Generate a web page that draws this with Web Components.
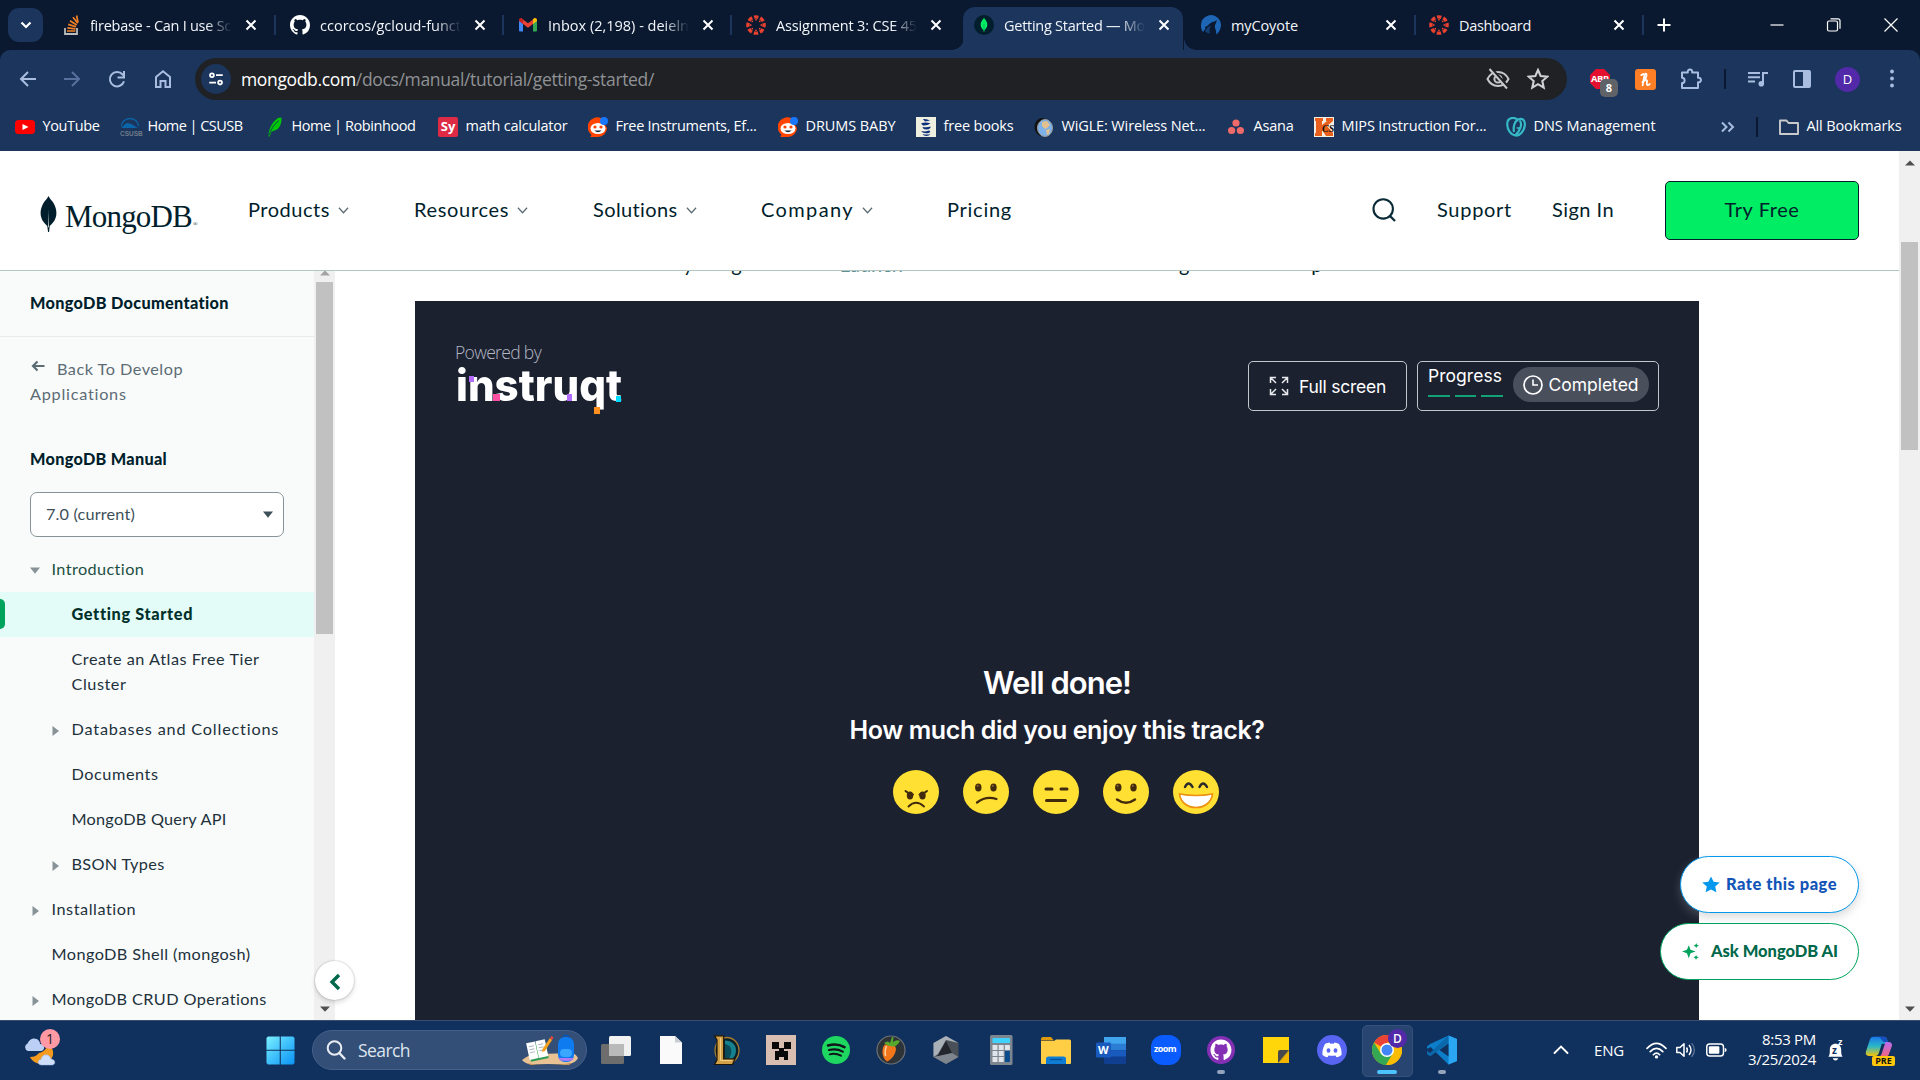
<!DOCTYPE html>
<html lang="en">
<head>
<meta charset="utf-8">
<title>Getting Started — MongoDB Manual</title>
<style>
html,body{margin:0;height:100%;overflow:hidden;background:#fff}
body{font-family:"Open Sans","Noto Sans",sans-serif;width:1920px;height:1080px}
</style>
</head>
<body>
<desktop-screen></desktop-screen>
<script>
const ICONS = {
  // --- tab favicons
  stack:['0 0 20 20','<path d="M4 13v6h12v-6" fill="none" stroke="#bcbbbb" stroke-width="1.8"/><g stroke="#f48024" stroke-width="1.7"><path d="M6 16h8.4M6.3 12.9l8.2.9M7.2 9.4l7.8 2.4M9 5.700l6.700 4.300M12 2.300l4.700 6M15.600.5l1.400 7"/></g>'],
  github:['0 0 16 16','<path fill="#fff" d="M8 0C3.58 0 0 3.58 0 8c0 3.54 2.29 6.53 5.47 7.59.4.07.55-.17.55-.38 0-.19-.01-.82-.01-1.49-2.01.37-2.53-.49-2.69-.94-.09-.23-.48-.94-.82-1.13-.28-.15-.68-.52-.01-.53.63-.01 1.08.58 1.23.82.72 1.21 1.87.87 2.33.66.07-.52.28-.87.51-1.07-1.78-.2-3.64-.89-3.64-3.95 0-.87.31-1.59.82-2.15-.08-.2-.36-1.02.08-2.12 0 0 .67-.21 2.2.82.64-.18 1.32-.27 2-.27s1.36.09 2 .27c1.53-1.04 2.2-.82 2.2-.82.44 1.1.16 1.92.08 2.12.51.56.82 1.27.82 2.15 0 3.07-1.87 3.75-3.65 3.95.29.25.54.73.54 1.48 0 1.07-.01 1.93-.01 2.2 0 .21.15.46.55.38A8.01 8.01 0 0 0 16 8c0-4.42-3.58-8-8-8z"/>'],
  gmail:['0 0 20 20','<path fill="#4285f4" d="M1 5v10.500q0 1 1 1h3V8z"/><path fill="#34a853" d="M19 5v10.500q0 1-1 1h-3V8z"/><path fill="#ea4335" d="M5 9V4.500l5 3.700 5-3.700V9l-5 3.700z"/><path fill="#c5221f" d="M1 5.500V5c0-2 2-2.500 3.200-1.600L5 4v5L1 6z"/><path fill="#fbbc04" d="M19 6V5c0-2-2-2.500-3.200-1.600L15 4v5z"/>'],
  canvas:['0 0 20 20','<circle cx="10" cy="10" r="8.100" fill="none" stroke="#e8412f" stroke-width="3.400" stroke-dasharray="4.400 1.960" stroke-dashoffset="2.200"/><g fill="#e8412f"><circle cx="10" cy="4.700" r=".9"/><circle cx="10" cy="15.300" r=".9"/><circle cx="4.700" cy="10" r=".9"/><circle cx="15.300" cy="10" r=".9"/><circle cx="6.300" cy="6.300" r=".9"/><circle cx="13.700" cy="6.300" r=".9"/><circle cx="6.300" cy="13.700" r=".9"/><circle cx="13.700" cy="13.700" r=".9"/></g>'],
  leaf:['0 0 20 20','<circle cx="10" cy="10" r="10" fill="#001e2b"/><path d="M10 3c2.500 2.700 3.500 5 3.300 7.300-.2 2.200-1.400 3.700-2.900 4.900L10 17l-.4-1.800C8.100 14 6.900 12.500 6.700 10.300 6.500 8 7.500 5.700 10 3z" fill="#00ed64"/><path d="M10 9v8" stroke="#00a35c" stroke-width=".7"/>'],
  coyote:['0 0 20 20','<path fill="#1e66b5" d="M0 10a10 10 0 0 1 17-7 10 10 0 0 1 2.500 10c-.7 3-2 5-4.500 6.500.4-2.500 0-4.500-1-6.500-.3-1.700 0-3.500 1-5L16 5l-2.500 1.500c-3 .5-5 2-6.500 4L4 12l.5 1.500L2 17a10 10 0 0 1-2-7z"/><path fill="#1e66b5" d="M7 12l3-1.500c-1.500 2.500-1.700 5-1.200 8C6.500 18 5 17.500 4 16z" opacity=".5"/>'],
  close:['0 0 20 20','<path d="M5.500 5.500l9 9m0-9l-9 9" stroke="#fff" stroke-width="2"/>'],
  chev:['0 0 20 20','<path d="M5.500 7.500l4.500 4.500 4.500-4.500" fill="none" stroke="#fff" stroke-width="2.200"/>'],
  plus:['0 0 20 20','<path d="M10 3.500v13M3.500 10h13" stroke="#fff" stroke-width="2"/>'],
  min:['0 0 20 20','<path d="M3.500 10h13" stroke="#fff" stroke-width="1.200"/>'],
  restore:['0 0 20 20','<rect x="3.500" y="6" width="10" height="10" rx="1.500" fill="none" stroke="#fff" stroke-width="1.200"/><path d="M6.500 3.800h7.500q2 0 2 2v8" fill="none" stroke="#fff" stroke-width="1.200"/>'],
  wclose:['0 0 20 20','<path d="M3.500 3.500l13 13m0-13l-13 13" stroke="#fff" stroke-width="1.200"/>'],
  // --- toolbar
  back:['0 0 20 20','<path d="M18 10H3m7-7l-7 7 7 7" fill="none" stroke="#a9bde0" stroke-width="2"/>'],
  fwd:['0 0 20 20','<path d="M2 10h15m-7-7l7 7-7 7" fill="none" stroke="#56719d" stroke-width="2"/>'],
  reload:['0 0 20 20','<path d="M17 12.200A7.200 7.200 0 1 1 15.600 5.500l1.900 2" fill="none" stroke="#a9bde0" stroke-width="2"/><path d="M17 2v6.500h-6.500" fill="none" stroke="#a9bde0" stroke-width="2"/>'],
  home:['0 0 20 20','<path d="M3 8l7-5.800L17 8v10h-4.500v-6h-5v6H3z" fill="none" stroke="#a9bde0" stroke-width="2"/>'],
  tune:['0 0 20 20','<g fill="none" stroke="#fff" stroke-width="2"><circle cx="5.500" cy="5.800" r="2.100"/><path d="M10 5.800h7.500M2.500 14h7.500"/><circle cx="14.500" cy="14" r="2.100"/></g>'],
  eye:['0 0 24 24','<g fill="none" stroke="#c7c8ca" stroke-width="2"><path d="M1.500 12C4 7 8 5 12 5s8 2 10.500 7c-2.500 5-6.500 7-10.500 7S4 17 1.500 12z"/><circle cx="12" cy="12" r="3.600"/></g><path d="M5 1.500L22 20" stroke="#202124" stroke-width="3"/><path d="M3.500 2L21 21.500" stroke="#c7c8ca" stroke-width="2"/>'],
  star:['0 0 20 20','<path d="M10 1.800l2.400 5.500 6 .6-4.500 4 1.300 5.900-5.200-3.100-5.200 3.100 1.300-5.900-4.500-4 6-.6z" fill="none" stroke="#d0d1d3" stroke-width="1.900"/>'],
  puzzle:['0 0 24 24','<path d="M3 5.500h5.800a2.300 2.300 0 1 1 4.400 0H19v5.300a2.300 2.300 0 1 1 0 4.400V21H3v-5a2.600 2.600 0 1 0 0-5.200z" fill="none" stroke="#a9bde0" stroke-width="2" stroke-linejoin="round"/>'],
  music:['0 0 20 20','<g stroke="#a9bde0" stroke-width="2" fill="none"><path d="M0 4h12M0 8.300h12M0 12.600h7"/><path d="M15 14.500V4h5"/></g><circle cx="13.300" cy="14.800" r="2.800" fill="#a9bde0"/>'],
  panel:['0 0 20 20','<rect x="2" y="2" width="16" height="16" rx="1" fill="none" stroke="#a9bde0" stroke-width="2"/><path d="M11 2h7v16h-7z" fill="#a9bde0"/>'],
  dots:['0 0 20 20','<g fill="#a9bde0"><circle cx="10" cy="2.500" r="1.900"/><circle cx="10" cy="9.500" r="1.900"/><circle cx="10" cy="16.500" r="1.900"/></g>'],
  abp:['0 0 20 20','<path d="M6 0h8l6 6v8l-6 6H6l-6-6V6z" fill="#e5102d"/>'],
  honey:['0 0 20 20','<path d="M7 12.500c3-2.500 4-5 4-7 0-1.500-1.500-1.500-2 .5L7.300 15.500M8.200 12c1.300-2 3.300-2.300 3.300-.5 0 1.200-.6 2.600 0 3.500.7.700 1.800.2 2.500-.8M6 5.800l2-1" fill="none" stroke="#fff" stroke-width="1.700" stroke-linecap="round"/>'],
  // --- bookmarks
  youtube:['0 0 20 20','<rect y="3" width="20" height="14" rx="3.500" fill="#f00"/><path d="M7.500 7l6 3-6 3z" fill="#fff"/>'],
  csusb:['0 0 20 20','<path d="M1.500 9.500a8.500 8 0 0 1 17 0" fill="none" stroke="#0a66a8" stroke-width="1.300"/><path d="M1 11c3-2 4-5 6.500-5 2 0 2 1 3.500 1 2 0 4 3.500 8 4z" fill="#0a66a8"/>'],
  robin:['0 0 20 20','<path d="M4.500 19.500C4.500 12 8 5 14 1c1.500-.7 3-.7 3.500 0 .3 3.500-1 9-4.500 11.500-2.500 1.300-4 1.500-5.500 2L5.700 19.500z" fill="#00c805"/><path d="M5 18.500C6.500 13 10 7 15 3.500" stroke="#1b355d" stroke-width=".9" fill="none"/>'],
  reddit:['0 0 20 20','<path d="M2 20c1-1 1.500-1.500 1.300-2.500A9.500 9.500 0 0 1 5 1.500C8 0 11 0 13 1l6 10a9 9 0 0 1-9 9z" fill="#ff4500"/><ellipse cx="10" cy="11.500" rx="7.500" ry="5.600" fill="#fff"/><circle cx="7" cy="10" r="1.600" fill="#ff4500"/><circle cx="13" cy="10" r="1.600" fill="#ff4500"/><path d="M6.300 13.500q3.700 3.500 7.400 0z" fill="#123"/><circle cx="16" cy="4" r="4" fill="#1877ff"/>'],
  books:['0 0 20 20','<path fill="#efefdf" d="M0 0h20v20H0z"/><g fill="#0b2e7d"><path d="M7 2q4-.5 7 1.500L9 4.500zM5 6.500q5-2 9.500 0-3 2.200-7.500 2zM6.500 10q5 .8 8-.5.5 2.500-4 3-3.500 0-4-2.500zM5 14q4 1 8-.5 3 1.500-1 2.700-5 .6-7-2.200zM6.500 17q4 1.200 8 0-1.500 2-4 2-3 0-4-2z"/></g>'],
  wigle:['0 0 20 20','<ellipse cx="8" cy="10" rx="7.500" ry="9" fill="#111"/><ellipse cx="11" cy="11" rx="7.500" ry="8.500" fill="#7fb2e8" stroke="#999" stroke-width="1"/><path d="M8 5l5-1 3 4-3 3-2 1-3-3zM12 13l4-1-1 5-2 1z" fill="#e3c08e"/>'],
  asana:['0 0 20 20','<g fill="#f06a6a"><circle cx="10" cy="6" r="3.600"/><circle cx="5.600" cy="13.500" r="3.600"/><circle cx="14.400" cy="13.500" r="3.600"/></g>'],
  kicon:['0 0 20 20','<path fill="#f4efe4" d="M0 0h20v20H0z"/><path fill="#e8601c" d="M1 1h8v3H8v4l5-4h-1V1h7v3l-6 5 6 7v3h-7l-4-6v6H1v-3h1V4H1z"/>'],
  godaddy:['0 0 20 20','<g fill="none" stroke="#35b9c6" stroke-width="2.200"><path d="M12 3.500C9-.5 1-.2 1.200 7.500 1.400 13 5 18 9 18.500c5-4 8-12 4.500-15"/><path d="M8 15C7 10 8.500 4.500 12 2.500c4-2 7.500.5 6.800 6C18 14 14 19 10 18.500"/></g><path d="M10.500 11h3.500l-1.500 3" fill="none" stroke="#35b9c6" stroke-width="1.500"/>'],
  more:['0 0 20 20','<path d="M4 5.500l4.500 4.500L4 14.500M10.500 5.500L15 10l-4.500 4.500" fill="none" stroke="#a9bde0" stroke-width="2"/>'],
  folder:['0 0 20 20','<path d="M1 3.500h6.500l2 2.500H19v11H1z" fill="none" stroke="#c9cacc" stroke-width="1.900" stroke-linejoin="round"/>'],
  // --- site
  mleaf:['0 0 18 38','<path d="M9 0c1.200 2.800 3.300 4.200 5.300 7.300 4 6.500 4.300 14-.3 19.700-1.200 1.600-2.500 2.700-3.700 3.700L9.600 37H8.500L7.700 30.700C6.500 29.700 5.200 28.600 4 27-.6 21.300-.3 13.800 3.700 7.300 5.700 4.200 7.800 2.800 9 0z" fill="#001e2b"/><path d="M9 14l.5 18h-1z" fill="#c8d4cf"/>'],
  ndown:['0 0 12 12','<path d="M1 3l5 5.500L11 3" fill="none" stroke="#5c6c75" stroke-width="1.400"/>'],
  search:['0 0 24 24','<circle cx="11.200" cy="10.900" r="9.700" fill="none" stroke="#0b2a37" stroke-width="2.100"/><path d="M18 18l5 5" stroke="#0b2a37" stroke-width="2.300"/>'],
  arrow:['0 0 14 12','<path d="M13.500 6H2M6.500 1.500L2 6l4.500 4.500" fill="none" stroke="#5c6c75" stroke-width="2.200"/>'],
  down:['0 0 10 7','<path d="M0 .5h10L5 6.700z" fill="currentColor"/>'],
  right:['0 0 7 12','<path d="M.5 1l6.500 5-6.500 5z" fill="currentColor"/>'],
  up:['0 0 10 7','<path d="M0 6.500h10L5 .5z" fill="currentColor"/>'],
  left:['0 0 12 18','<path d="M10 2L3 9l7 7" fill="none" stroke="#00684a" stroke-width="3.400"/>'],
  full:['0 0 20 20','<g fill="none" stroke="#e6e8ec" stroke-width="1.500"><path d="M1.500 7V1.500H7M1.500 1.500L7 7M13 1.500h5.500V7M18.500 1.500L13 7M1.500 13v5.500H7M1.500 18.500L7 13M18.500 13v5.500H13M18.500 18.500L13 13"/></g>'],
  clock:['0 0 20 20','<circle cx="10" cy="10" r="9" fill="none" stroke="#fff" stroke-width="1.700"/><path d="M10 4.500V10h5" fill="none" stroke="#fff" stroke-width="1.600"/>'],
  fstar:['0 0 20 20','<path d="M10 .5l2.900 6.300 6.800.8-5 4.700 1.300 6.900-6-3.400-6 3.400 1.300-6.900-5-4.700 6.800-.8z" fill="#0498ec"/>'],
  spark:['0 0 20 20','<path d="M8 2.500l2 5.500 6 2-6 2.200L8 18l-2.200-5.800L0 10l5.800-2z" fill="#00a35c"/><path d="M16.700 0l.9 2.200 2.400.9-2.400.9-.9 2.300-.9-2.300-2.300-.9 2.300-.9zM16.500 14l.9 2 2.300.9-2.300.9-.9 2.200-.9-2.200-2.200-.9 2.200-.9z" fill="#00a35c"/>'],
  // --- rating faces
  f1:['0 0 46 44','<ellipse cx="23" cy="22" rx="23" ry="22" fill="#ffe033"/><g fill="#422b0d"><ellipse cx="17" cy="25.500" rx="3.200" ry="4"/><ellipse cx="29.500" cy="25.500" rx="3.200" ry="4"/></g><g fill="none" stroke="#422b0d" stroke-width="1.900" stroke-linecap="round"><path d="M12.500 21q3 3 7.500 3.500M34 21q-3 3-7.500 3.500M15.500 36.500q7.500-7.500 15.500 0"/></g>'],
  f2:['0 0 46 44','<ellipse cx="23" cy="22" rx="23" ry="22" fill="#ffe033"/><ellipse cx="15.300" cy="17.500" rx="3.200" ry="4" fill="#422b0d"/><ellipse cx="30.500" cy="17.500" rx="3.200" ry="4" fill="#422b0d"/><circle cx="14.600" cy="15.800" r="1" fill="#8c6a3a"/><circle cx="29.800" cy="15.800" r="1" fill="#8c6a3a"/><path d="M14 32.500q9-7 19.500-3.500" fill="none" stroke="#422b0d" stroke-width="2.300" stroke-linecap="round"/>'],
  f3:['0 0 46 44','<ellipse cx="23" cy="22" rx="23" ry="22" fill="#ffe033"/><path d="M13 19h6M28 19h6M13.500 30.500h19" stroke="#422b0d" stroke-width="3" stroke-linecap="round"/>'],
  f4:['0 0 46 44','<ellipse cx="23" cy="22" rx="23" ry="22" fill="#ffe033"/><ellipse cx="15.300" cy="17.500" rx="3.200" ry="4" fill="#422b0d"/><ellipse cx="30.500" cy="17.500" rx="3.200" ry="4" fill="#422b0d"/><circle cx="14.600" cy="15.800" r="1" fill="#8c6a3a"/><circle cx="29.800" cy="15.800" r="1" fill="#8c6a3a"/><path d="M14 29.500q9 6.500 18 0" fill="none" stroke="#422b0d" stroke-width="2.400" stroke-linecap="round"/>'],
  f5:['0 0 46 44','<ellipse cx="23" cy="22" rx="23" ry="22" fill="#ffe033"/><path d="M12 17q3.500-7 7.500 0M26.500 17q3.500-7 7.500 0" fill="none" stroke="#2b2a2a" stroke-width="2.400" stroke-linecap="round"/><path d="M6.500 24q16.500 3 33 0c-1 8-7.500 13.500-16.500 13.500S7.500 32 6.500 24z" fill="#fff" stroke="#ee9010" stroke-width="1.700"/>'],
  // --- taskbar
  weather:['0 0 36 36','<path d="M14 21c5-1 8-5 9-9 3 2 6 6 5 11s-6 9-11 9c-6 0-10-3-12-7 4 0 6-1 9-4z" fill="#f59a1c"/><path d="M3 19a4 4 0 0 1-.5-7.500C4 8 6.500 6.500 9 6.500c4 0 6 3 6 5.500 3 0 4.500 2 4 4.500-.5 1.500-1.500 2.500-3 2.500z" fill="#bcd0f5"/><path d="M16 33c-2.500-.3-3-2-2.700-3.500.3-1.500 1.500-2 2.700-2 .5-3 2.500-4.700 5-4.700s4.500 2 4.800 4.200c2.200 0 4 1.500 4 3.300S28.500 33 27 33z" fill="#cfdefa" stroke="#9bb5e6" stroke-width=".5"/>'],
  win:['0 0 30 30','<defs><linearGradient id="w" x1="0" y1="0" x2="1" y2="1"><stop offset="0" stop-color="#7cf0ff"/><stop offset=".5" stop-color="#3fc0fb"/><stop offset="1" stop-color="#0a93f5"/></linearGradient></defs><path d="M2 .5h12.200v13.700H.5V2zM15.300.5H28L29.500 2v12.200H15.300zM.5 15.300h13.700v14.200H2L.5 28zM15.300 15.300h14.200V28L28 29.500H15.300z" fill="url(#w)"/>'],
  tsearch:['0 0 20 20','<circle cx="8.500" cy="8" r="6.800" fill="none" stroke="#e9edf3" stroke-width="2"/><path d="M13.300 13l5.200 5.500" stroke="#e9edf3" stroke-width="2.400" stroke-linecap="round"/>'],
  school:['0 0 58 32','<path d="M1 26q8-7 18-6l32-1q4 1 6 5-2 5-10 6H13Q5 31 1 26z" fill="#e8c292"/><path d="M5 29q20 4 46 0l-3 2H10z" fill="#c89457"/><g transform="rotate(-12 17 17)"><path d="M8 9h18v17H8z" fill="#2f9a54"/><path d="M7 7h9v17H7zM16.500 7H26v17h-9.500z" fill="#fff"/><path d="M9 11h5M9 14h5M9 17h5M18.500 11h5M18.500 14h5M18.500 17h5" stroke="#a9b6c5" stroke-width="1"/></g><path d="M29 4l2 2-7 11-3 1 .5-3z" fill="#f5a11b"/><path d="M29 4l1.500-2 2 1.500L31 6z" fill="#e8473c"/><rect x="37" y="3" width="16" height="25" rx="7" fill="#0f7bf0"/><path d="M42 3q3-4 6 0" fill="none" stroke="#0b56b5" stroke-width="1.500"/><rect x="39" y="15" width="12" height="8" rx="4" fill="#39a7ff"/><path d="M38 24h14v2q-6 2-14 0z" fill="#b07af5"/>'],
  taskview:['0 0 32 30','<rect x="1" y="9" width="23" height="20" rx="1.500" fill="#6d6d6d"/><rect x="9" y="1" width="22" height="20" rx="1.500" fill="#f1f1f1"/><path d="M9 9h15v12H9z" fill="#b9b9b9"/>'],
  file:['0 0 30 30','<path d="M4 1h15l7 6.500V29H4z" fill="#fafafa"/><path d="M19 1v6.500h7z" fill="#c9cdd2"/>'],
  lol:['0 0 30 30','<ellipse cx="16" cy="15.500" rx="12" ry="13" fill="#0a2028" stroke="#a57b30" stroke-width="1.300"/><path d="M14 5.500c7 0 11 4.500 11 10 0 4-2 7-4 8.500h-7z" fill="#15808e"/><path d="M14 9c5 1 7 4 6 10l-2 5h-4z" fill="#0b4a58"/><path d="M3.500.8h9.200v23H24l-2.500 5.700H3.500L6 25V5z" fill="#d2a047" stroke="#1e1608" stroke-width="1.200"/><path d="M9.500 3v22.500h11" fill="none" stroke="#f0cf86" stroke-width="1"/>'],
  creeper:['0 0 30 30','<path fill="#d8bdb1" d="M0 0h30v30H0z"/><path d="M6 7h7v7H6zM18 7h7v7h-7zM13 13h5v3h4v9h-4v-3h-5v3H9v-9h4z" fill="#090909"/>'],
  spotify:['0 0 30 30','<circle cx="15" cy="15" r="14" fill="#1ed760"/><g fill="none" stroke="#10151b" stroke-linecap="round"><path d="M7 10.500q9-2.500 16.500 1.700" stroke-width="2.600"/><path d="M8 15q7.500-2 13.800 1.600" stroke-width="2.200"/><path d="M8.700 19.300q6-1.500 11.300 1.400" stroke-width="1.900"/></g>'],
  fl:['0 0 30 30','<circle cx="15" cy="15" r="14" fill="#2e3338" stroke="#6c7278" stroke-width="1.200"/><path d="M8.500 10c5-3 11-1 11.500 4-.5 6-5 11-9 12.500-3-2-5-7-4.500-11 .2-2.500 1-4.500 2-5.500z" fill="#f4761b"/><path d="M10.500 11q-2 4-1 10" stroke="#ffd0a0" stroke-width="1.600" fill="none"/><path d="M8 8q4-3 6 0l2-6h1.500L17 7q4-3 7-1-2 4-5 5.500-6 .5-11-3.500z" fill="#58a82c"/>'],
  hex:['0 0 30 30','<path d="M15 1l12.500 7v14L15 29 2.500 22V8z" fill="#4a5058"/><path d="M15 1l12.500 7L15 5 7 19l-4.500 3V8z" fill="#a9b0b8"/><path d="M15 6l6 12-15 4z" fill="#23272d"/><path d="M2.500 22L21 18l6.500 4L15 29z" fill="#7e858e"/>'],
  calc:['0 0 30 30','<rect x="4" y="0" width="22.500" height="30" rx="1.500" fill="#7d868f"/><path d="M6.500 3h17.500v5H6.500z" fill="#3fd2ff"/><g fill="#dfe5ea"><path d="M6.500 10h5v5h-5zM12.700 10h5v5h-5zM18.900 10h5v5h-5zM6.500 16h5v5h-5zM12.700 16h5v5h-5zM6.500 22h5v5h-5zM12.700 22h5v5h-5z"/></g><path d="M18.900 16h5v11h-5z" fill="#0a4b8c"/>'],
  explorer:['0 0 30 30','<path d="M0 4q0-2 2-2h8l3 3.500H0z" fill="#e09b0d"/><path d="M0 6h13l2-1.500h13.500q1.500 0 1.500 1.500v22q0 1-1 1H1q-1 0-1-1z" fill="#ffce45"/><path d="M5 29v-5q0-2.500 2.500-2.500h15Q25 21.500 25 24v5z" fill="#0f7cd4"/><path d="M9 24.500h12" stroke="#075095" stroke-width="1.200"/>'],
  word:['0 0 30 30','<path d="M8 2h22v7H8z" fill="#41a5ee"/><path d="M8 8.700h22v6.600H8z" fill="#2b7cd3"/><path d="M8 15.200h22v6.600H8z" fill="#185abd"/><path d="M8 21.800h22v6.200q0 1-1 1H9q-1 0-1-1z" fill="#103f91"/><rect x="0" y="7.500" width="15" height="15" rx="1.200" fill="#185abd"/>'],
  zoom:['0 0 30 30','<rect width="30" height="30" rx="12" fill="#0b5cff"/>'],
  ghub:['0 0 30 30','<circle cx="15" cy="15" r="14" fill="#8430b5"/><g transform="translate(4.500 4.500) scale(1.310)"><path fill="#fff" d="M8 0C3.580 0 0 3.580 0 8c0 3.540 2.290 6.530 5.470 7.590.4.070.55-.17.550-.38 0-.19-.01-.82-.01-1.490-2.010.37-2.530-.49-2.690-.94-.09-.23-.48-.94-.82-1.130-.28-.15-.68-.52-.01-.53.63-.01 1.080.58 1.230.82.720 1.210 1.870.87 2.330.66.070-.52.280-.87.510-1.070-1.780-.2-3.640-.89-3.640-3.950 0-.87.310-1.590.820-2.150-.08-.2-.36-1.020.080-2.120 0 0 .67-.21 2.200.82.640-.18 1.320-.27 2-.27s1.360.09 2 .27c1.530-1.040 2.200-.82 2.200-.82.440 1.100.16 1.920.080 2.120.51.560.820 1.270.820 2.150 0 3.070-1.870 3.750-3.650 3.950.29.250.54.730.540 1.480 0 1.070-.01 1.930-.01 2.200 0 .21.150.46.550.38A8.010 8.010 0 0 0 16 8c0-4.420-3.580-8-8-8z"/></g>'],
  sticky:['0 0 30 30','<path d="M2 2h26v14L17 28H2z" fill="#ffd60a"/><path d="M28 15L17 28V17q0-2 2-2z" fill="#46484b"/><path d="M28 16v12H17z" fill="#f2b600"/>'],
  discord:['0 0 30 30','<circle cx="15" cy="15" r="15" fill="#5865f2"/><path d="M8 9c2-1 3-1.300 4.500-1.500l.7 1.200q1.800-.3 3.600 0l.7-1.200C19 7.700 20.500 8.200 22 9c2 3.500 3 7.500 2.500 11-1.500 1.300-3 2-5 2.300l-1-1.900q-3.500.9-7 0l-1 1.900c-2-.3-3.500-1-5-2.300C5 16.500 6 12.500 8 9z" fill="#fff"/><ellipse cx="11.500" cy="15.500" rx="1.900" ry="2.200" fill="#5865f2"/><ellipse cx="18.500" cy="15.500" rx="1.900" ry="2.200" fill="#5865f2"/>'],
  chrome:['0 0 30 30','<circle cx="15" cy="15" r="15" fill="#fbbc04"/><path d="M15 15L2 7.500A15 15 0 0 1 28 7.500H15z" fill="#ea4335"/><path d="M2 7.500A15 15 0 0 0 14 30l7-11.500L15 15 8.700 18.500z" fill="#34a853"/><path d="M28 7.500H15v7.500l6 3.500L14 30A15 15 0 0 0 28 7.500z" fill="#fbbc04"/><circle cx="15" cy="15" r="7" fill="#fff"/><circle cx="15" cy="15" r="5.500" fill="#4285f4"/>'],
  vscode:['0 0 30 30','<path d="M21.500.5L30 4v22l-8.500 3.500L3.500 12 1 13.800 0 13v-1.500l3-2.500z" fill="#0d7dc9"/><path d="M21.500 29.500L30 26V4L21.500.5z" fill="#2ba6f2"/><path d="M21.500.5L3 18l-3-2.500v3.500l3 2.500L21.500 8z" fill="#0a68ab"/><path d="M21.500 8.500v13L12.500 15z" fill="#10305d"/>'],
  tup:['0 0 20 20','<path d="M3.500 13L10 6.500l6.500 6.500" fill="none" stroke="#fff" stroke-width="1.900" stroke-linecap="round"/>'],
  wifi:['0 0 20 16','<g fill="none" stroke="#fff" stroke-width="1.600" stroke-linecap="round"><path d="M1 6q9-9.500 18 0M4 9q6-6 12 0M7 12q3-3 6 0"/></g><circle cx="10" cy="14" r="1.600" fill="#fff"/>'],
  sound:['0 0 20 16','<path d="M.8 5.500H4L8 1.700v12.600L4 10.500H.8z" fill="none" stroke="#fff" stroke-width="1.500" stroke-linejoin="round"/><path d="M10.500 5.500q1.800 2.500 0 5" fill="none" stroke="#fff" stroke-width="1.500"/><path d="M13 3q4 5 0 10" fill="none" stroke="#fff" stroke-width="1.400"/><path d="M15.600 1.200q5.600 6.800 0 13.600" fill="none" stroke="#5f7699" stroke-width="1.300"/>'],
  battery:['0 0 22 14','<rect x=".8" y="1" width="17.500" height="12" rx="3" fill="none" stroke="#fff" stroke-width="1.500"/><rect x="3" y="3.200" width="11" height="7.600" rx="1" fill="#fff"/><path d="M19.600 5v4q2 0 2-2t-2-2z" fill="#fff"/>'],
  bell:['0 0 18 22','<path d="M1.500 17.500c1.500-2 1.500-4 1.500-7.500 0-3.500 2.500-6 6-6s6 2.500 6 6c0 3.500 0 5.500 1.500 7.500zM6 19h6q-1 2.500-3 2.500T6 19z" fill="#fff"/>'],
  copilot:['0 0 30 30','<defs><linearGradient id="ca" x1="0" y1="0" x2="0" y2="1"><stop offset="0" stop-color="#1a78e8"/><stop offset=".5" stop-color="#2bb8c6"/><stop offset="1" stop-color="#f4c40d"/></linearGradient><linearGradient id="cb" x1="0" y1="0" x2="0" y2="1"><stop offset="0" stop-color="#b76cf0"/><stop offset="1" stop-color="#f5657d"/></linearGradient></defs><path d="M9 1h11q3 0 4 4l1 4h-7l-3 10q-1 4-4 4H4q-4 0-3-5L5 5Q6 1 9 1z" fill="url(#ca)"/><path d="M22 7h3q4 0 4 4l-3 9q-1 4-4 4h-8q3 0 4-4z" fill="url(#cb)"/><path d="M15 1h5q3 0 4 4l.8 2H20z" fill="#164fc0"/>'],
};

const BASE = '*{box-sizing:border-box}:host{display:block;box-sizing:border-box}';
const define = (name, css, html) => customElements.define(name, class extends HTMLElement {
  constructor(){
    super();
    const root = this.attachShadow({mode:'open'});
    root.innerHTML = `<style>${BASE}${css}</style>${typeof html === 'function' ? html(this) : html}`;
  }
});

customElements.define('ui-icon', class extends HTMLElement {
  connectedCallback(){
    if (this.shadowRoot) return;
    const [box, body] = ICONS[this.getAttribute('name')];
    const w = this.getAttribute('w') || 20, h = this.getAttribute('h') || w;
    this.attachShadow({mode:'open'}).innerHTML =
      `<style>:host{display:block;flex:none;width:${w}px;height:${h}px}svg{display:block}</style><svg width="${w}" height="${h}" viewBox="${box}" preserveAspectRatio="none">${body}</svg>`;
  }
});

// A single line of text tracked (or condensed) to an exact width.
const fitted = new Set();
customElements.define('fit-text', class extends HTMLElement {
  connectedCallback(){
    if (!this.shadowRoot) this.attachShadow({mode:'open'}).innerHTML =
      '<style>:host{display:block;flex:none;white-space:pre}span{display:inline-block;transform-origin:0 50%}</style><span><slot></slot></span>';
    fitted.add(this);
  }
  fit(){
    const w = +this.getAttribute('w'), s = this.shadowRoot.querySelector('span');
    if (!w) return;
    const now = s.offsetWidth ? s.getBoundingClientRect().width : 0;
    if (!now) return;
    if (this.hasAttribute('scale')) s.style.transform = `scaleX(${w / now})`;
    else s.style.letterSpacing = (w - now) / this.textContent.length + 'px';
    this.style.width = w + 'px';
  }
});

define('scroll-bar', `
  :host{width:21px;background:#f0f0f0;display:flex;flex-direction:column;align-items:center;flex:none}
  i{display:block;background:#c1c1c1;width:17px}
  .g{flex:1}`,
  el => `<ui-icon name="up" w="10" h="6" style="color:${el.getAttribute('up')};margin-top:${el.getAttribute('a')}px"></ui-icon>
  <i style="margin-top:${el.getAttribute('b')}px;height:${el.getAttribute('h')}px"></i><div class="g"></div>
  <ui-icon name="down" w="10" h="6" style="color:#505050;margin-bottom:8px"></ui-icon>`);

define('browser-tab', `
  :host{width:228px;height:35px;display:flex;align-items:center;padding-left:14px;position:relative;flex:none;font-size:14.500px;color:#f2f5fa}
  :host([nudge]){padding-left:15px}
  :host([active])::before{content:"";position:absolute;z-index:-1;left:4px;right:4px;top:0;height:44px;border-radius:12px 12px 0 0;background:#1b355d}
  :host([sep])::after{content:"";position:absolute;right:-1px;top:8px;height:20px;width:2px;background:#1b355d}
  .t{width:141px;margin-left:10px;overflow:hidden;height:24px;line-height:24px;padding-top:1px}
  :host([fade]) .t{-webkit-mask-image:linear-gradient(90deg,#000 82%,transparent)}
  ui-icon.x{margin-left:9px}`,
  el => `<ui-icon name="${el.getAttribute('icon')}"></ui-icon><div class="t"><slot></slot></div><ui-icon class="x" name="close"></ui-icon>`);

define('tab-strip', `
  :host{height:50px;background:#0a1930;display:flex;position:relative;z-index:0;padding-top:7px}
  .s{width:35px;height:34px;margin:1px 4px 0 8px;border-radius:11px;background:#1b355d;display:flex;align-items:center;justify-content:center}
  .c{position:absolute;width:12px;height:12px;bottom:0;z-index:-1}
  .p{margin:8px 0 0 11px}.w{margin-left:auto;display:flex;gap:37px;padding:8px 19px 0 0}`, `
  <div class="s"><ui-icon name="chev"></ui-icon></div>
  <browser-tab icon="stack" fade sep><fit-text w="141" style="margin-left:-1px">firebase - Can I use Sc</fit-text></browser-tab>
  <browser-tab icon="github" fade sep nudge><fit-text w="141">ccorcos/gcloud-funct</fit-text></browser-tab>
  <browser-tab icon="gmail" fade sep nudge><fit-text w="141">Inbox (2,198) - deieln</fit-text></browser-tab>
  <browser-tab icon="canvas" fade nudge><fit-text w="141">Assignment 3: CSE 45</fit-text></browser-tab>
  <browser-tab icon="leaf" fade active nudge><fit-text w="141">Getting Started — Mo</fit-text></browser-tab>
  <browser-tab icon="coyote" sep><fit-text w="67">myCoyote</fit-text></browser-tab>
  <browser-tab icon="canvas" sep><fit-text w="72">Dashboard</fit-text></browser-tab>
  <ui-icon class="p" name="plus"></ui-icon>
  <div class="w"><ui-icon name="min"></ui-icon><ui-icon name="restore"></ui-icon><ui-icon name="wclose"></ui-icon></div>
  <div class="c" style="left:952px;background:radial-gradient(circle at 0 0,transparent 11.500px,#1b355d 12px)"></div>
  <div class="c" style="left:1184px;background:radial-gradient(circle at 100% 0,transparent 11.500px,#1b355d 12px)"></div>`);

define('nav-toolbar', `
  :host{height:54px;display:flex;align-items:center;padding:4px 0 0 18px}
  .o{width:1372px;height:42px;border-radius:21px;background:#202124;display:flex;align-items:center;padding:0 18px 0 6px;font-size:17.500px;color:#8f9296}
  .o b{font-weight:400;color:#fff}
  .q{width:30px;height:30px;border-radius:50%;background:#1b355d;display:flex;align-items:center;justify-content:center;margin-right:10px}
  .e{position:relative;margin-left:23px}
  .e .a{position:absolute;left:1px;top:3px;color:#fff;font:700 9.500px/14px "Open Sans",sans-serif;letter-spacing:-.5px}
  .e .n{position:absolute;left:10px;top:10px;width:18px;height:18px;border-radius:5px;background:#5f6368;color:#fff;font:700 11px/18px "Open Sans",sans-serif;text-align:center}
  .h{width:21px;height:21px;border-radius:3px;background:#ff7f27;margin-left:25px}
  .v{width:2px;height:20px;background:#0a1930;margin-left:21px}
  .d{width:25px;height:25px;border-radius:50%;background:#5229a8;color:#fff;text-align:center;font-size:13px;line-height:25px;margin-left:23px}`, `
  <ui-icon name="back"></ui-icon><ui-icon name="fwd" style="margin-left:24px"></ui-icon><ui-icon name="reload" style="margin-left:25px"></ui-icon><ui-icon name="home" style="margin-left:26px"></ui-icon>
  <div class="o" style="margin-left:22px"><div class="q"><ui-icon name="tune" w="18"></ui-icon></div><fit-text w="413"><b>mongodb.com</b>/docs/manual/tutorial/getting-started/</fit-text>
  <ui-icon name="eye" w="24" style="margin-left:auto"></ui-icon><ui-icon name="star" w="22" style="margin-left:17px"></ui-icon></div>
  <div class="e"><ui-icon name="abp" w="20"></ui-icon><span class="a">ABP</span><span class="n">8</span></div>
  <div class="h"><ui-icon name="honey" w="21"></ui-icon></div>
  <ui-icon name="puzzle" w="24" style="margin-left:23px"></ui-icon><div class="v"></div>
  <ui-icon name="music" style="margin-left:22px"></ui-icon><ui-icon name="panel" w="20" style="margin-left:24px"></ui-icon>
  <div class="d">D</div><ui-icon name="dots" w="20" style="margin-left:22px"></ui-icon>`);

define('book-mark', `
  :host{display:flex;align-items:center;flex:none}
  .i{position:relative;margin-right:7.500px}
  em{position:absolute;inset:0;font:700 13px/19px "Open Sans",sans-serif;text-align:center;color:#fff}
  fit-text{margin-top:-2px}`,
  el => { const i = el.getAttribute('icon'), g = el.getAttribute('glyph');
    return `<div class="i">${i ? `<ui-icon name="${i}"></ui-icon>` : '<div style="width:20px;height:20px;border-radius:2px;background:#dd2a45"></div>'}${g ? `<em style="${el.getAttribute('gs') || ''}">${g}</em>` : ''}</div><fit-text w="${el.getAttribute('w')}">${el.getAttribute('label')}</fit-text>`; });

const marks = [['youtube','YouTube',57,105],['csusb','Home | CSUSB',95,144,'CSUSB','font:700 6.500px/30px sans-serif;color:#6f7b88;padding-top:2px'],['robin','Home | Robinhood',124,174],['','math calculator',102,150,'Sy'],
  ['reddit','Free Instruments, Ef...',141,190],['reddit','DRUMS BABY',90,138],['books','free books',70,118],['wigle','WiGLE: Wireless Net...',144,192],
  ['asana','Asana',40,88],['kicon','MIPS Instruction For...',145,192,'CS','font:italic 700 10px/24px serif;color:#111;padding-left:8px'],['godaddy','DNS Management',122,212]];
define('bookmarks-bar', `
  :host{height:46px;display:flex;align-items:center;padding:0 0 1px 15px;font-size:14.500px;color:#fff}
  .v{width:2px;height:20px;background:#0a1930;margin:0 20px 0 18px}`,
  marks.map(([i,l,w,s,g,gs]) => `<book-mark ${i?`icon="${i}"`:''} label="${l}" w="${w}" style="width:${s}px" ${g?`glyph="${g}"`:''} ${gs?`gs="${gs}"`:''}></book-mark>`).join('') +
  `<ui-icon name="more"></ui-icon><div class="v"></div><book-mark icon="folder" label="All Bookmarks" w="95" style="padding-left:1px"></book-mark>`);

define('browser-chrome', `:host{background:#0a1930;height:151px}
  .b{background:#1b355d;border-radius:10px 10px 0 0;height:101px}`,
  `<tab-strip></tab-strip><div class="b"><nav-toolbar></nav-toolbar><bookmarks-bar></bookmarks-bar></div>`);

const GEO = 'font-family:Lato,"Open Sans",sans-serif;';
define('site-header', `
  :host{height:120px;background:#fff;border-bottom:1px solid #b3c6bf;display:flex;align-items:center;${GEO}font-size:20px;color:#001e2b;padding:0 40px 1px 40px}
  .m{display:flex;align-items:center;font-family:"Liberation Serif",serif;font-size:31px;margin-top:6px;width:208px}
  .m ui-icon{margin:2px 8px 0 0}.m small{font-size:6px;margin:22px 0 0 1px}.m fit-text{margin-top:7px}
  .n{display:flex;align-items:center;flex:none}.n ui-icon{margin-left:8px}
  .n fit-text,.b fit-text{margin-top:-2px}.u{margin-top:-2px}
  .b{width:194px;height:59px;margin-left:auto;border:1px solid #001e2b;border-radius:5px;background:#00ed64;display:flex;align-items:center;justify-content:center}`, `
  <div class="m"><ui-icon name="mleaf" w="17" h="37"></ui-icon><fit-text w="127">MongoDB</fit-text><small>®</small></div>
  <div class="n" style="width:166px"><fit-text w="82">Products</fit-text><ui-icon name="ndown" w="11"></ui-icon></div>
  <div class="n" style="width:179px"><fit-text w="95">Resources</fit-text><ui-icon name="ndown" w="11"></ui-icon></div>
  <div class="n" style="width:168px"><fit-text w="85">Solutions</fit-text><ui-icon name="ndown" w="11"></ui-icon></div>
  <div class="n" style="width:186px"><fit-text w="93">Company</fit-text><ui-icon name="ndown" w="11"></ui-icon></div>
  <div class="n"><fit-text w="65">Pricing</fit-text></div>
  <ui-icon name="search" w="24" style="margin-left:360px"></ui-icon>
  <fit-text class="u" w="75" style="margin-left:41px">Support</fit-text><fit-text class="u" w="62" style="margin-left:40px">Sign In</fit-text>
  <div class="b"><fit-text w="75">Try Free</fit-text></div>`);

define('side-item', `
  :host{display:flex;padding:9px 0 11px;line-height:25px;color:#21313c;position:relative}
  :host([active]){background:#e3fcf7;font-weight:900;color:#00302a}
  :host([active])::before{content:"";position:absolute;left:0;top:7px;width:5px;height:30px;background:#00a35c;border-radius:0 5px 5px 0}
  .k{flex:none;display:flex;justify-content:flex-end;height:25px;align-items:center;padding-top:4px;color:#889397}`,
  el => { const d = +el.getAttribute('depth'), a = el.getAttribute('mark');
    return `<div class="k" style="width:${d ? 71.5 : 51.5}px;padding-right:${a === 'down' ? 12 : 13}px">${a ? `<ui-icon name="${a}" w="${a==='down'?10:7}" h="${a==='down'?7:12}"></ui-icon>` : ''}</div><div><slot></slot></div>`; });

define('side-bar', `
  :host{width:314px;background:#f9fbfa;${GEO}font-size:16.250px;color:#21313c;flex:none;overflow:hidden}
  .h{height:66px;border-bottom:1px solid #e8edeb;padding:19px 0 0 30px;line-height:25px;font-weight:900;color:#001e2b}
  .b{padding:19px 0 0 30px;line-height:25px;color:#5c6c75;height:109px}
  .b div{display:flex;gap:12px}.b ui-icon{margin:4px 0 0 1px}
  .t{padding-left:30px;line-height:25px;font-weight:900;color:#001e2b}
  .s{margin:21px 30px 10px;width:254px;height:45px;border:1px solid #889397;border-radius:7px;background:#fff;display:flex;align-items:center;justify-content:space-between;padding:0 10px 0 15px;color:#3d4f58}
  .s fit-text{margin-top:-2px}`, `
  <div class="h"><fit-text w="199">MongoDB Documentation</fit-text></div>
  <div class="b"><div><ui-icon name="arrow" w="14" h="12"></ui-icon><fit-text w="126">Back To Develop</fit-text></div><fit-text w="97">Applications</fit-text></div>
  <div class="t"><fit-text w="137">MongoDB Manual</fit-text></div>
  <div class="s"><fit-text w="89">7.0 (current)</fit-text><ui-icon name="down" w="10" h="7"></ui-icon></div>
  <side-item mark="down"><fit-text w="93" style="color:#1c4f42">Introduction</fit-text></side-item>
  <side-item depth="1" active><fit-text w="121">Getting Started</fit-text></side-item>
  <side-item depth="1"><fit-text w="188">Create an Atlas Free Tier</fit-text><fit-text w="55">Cluster</fit-text></side-item>
  <side-item depth="1" mark="right"><fit-text w="208">Databases and Collections</fit-text></side-item>
  <side-item depth="1"><fit-text w="87">Documents</fit-text></side-item>
  <side-item depth="1"><fit-text w="155">MongoDB Query API</fit-text></side-item>
  <side-item depth="1" mark="right"><fit-text w="93">BSON Types</fit-text></side-item>
  <side-item mark="right"><fit-text w="85">Installation</fit-text></side-item>
  <side-item><fit-text w="199">MongoDB Shell (mongosh)</fit-text></side-item>
  <side-item mark="right"><fit-text w="215.5">MongoDB CRUD Operations</fit-text></side-item>`);

define('track-player', `
  :host{width:1284px;height:719px;background:#1c2130;color:#fff;font-family:Inter,sans-serif;padding:39px 40px 0 40px}
  .r{display:flex;align-items:flex-start;height:90px}
  .p{color:#b4b8c6;font:300 17.500px/24px "Open Sans",sans-serif}
  .l{font:800 43px/48px Inter,sans-serif;position:relative;height:48px;margin:-3px 0 0 1px}
  .l i{position:absolute;z-index:1}
  .x{border:1px solid #c3c6cc;border-radius:5px;height:50px;display:flex;align-items:center;font-size:17.500px;margin-top:21px}
  .d{display:flex;gap:5px;margin-top:9px}.d i{width:21.500px;height:2px;background:#13a175}
  .c{width:136px;height:35px;border-radius:17.500px;background:#4a4f5c;display:flex;align-items:center;padding-left:10px;gap:6px;margin:-3px 0 0 10px}
  .w{font-size:31px;font-weight:600;line-height:40px;display:flex;justify-content:center;margin-top:233px}
  .q{font-size:25px;font-weight:600;line-height:32px;display:flex;justify-content:center;margin-top:11px}
  .f{display:flex;gap:24px;justify-content:center;margin-top:24px;padding-right:2px}`, `
  <div class="r"><div><fit-text class="p" w="86">Powered by</fit-text>
   <div class="l"><fit-text w="166" scale>instruqt</fit-text>
    <i style="left:13px;top:15px;width:5px;height:6px;background:#b36bff"></i><i style="left:37px;top:33px;width:7px;height:7px;background:#ff4fa3"></i>
    <i style="left:111px;top:33px;width:5px;height:7px;background:#b36bff"></i><i style="left:138px;top:46px;width:6px;height:7px;background:#ff8f1f"></i>
    <i style="left:160px;top:35px;width:5px;height:6px;background:#00dcff"></i></div></div>
   <div class="x" style="width:159px;margin-left:auto;padding-left:20px;gap:10px"><ui-icon name="full" w="20"></ui-icon><fit-text w="87">Full screen</fit-text></div>
   <div class="x" style="width:242px;margin-left:10px;padding-left:10px"><div style="margin-top:-10px"><fit-text w="74">Progress</fit-text><div class="d"><i></i><i></i><i></i></div></div>
    <div class="c"><ui-icon name="clock" w="20"></ui-icon><fit-text w="90">Completed</fit-text></div></div></div>
  <div class="w"><fit-text w="148">Well done!</fit-text></div>
  <div class="q"><fit-text w="415">How much did you enjoy this track?</fit-text></div>
  <div class="f">${[1,2,3,4,5].map(n => `<ui-icon name="f${n}" w="46" h="44"></ui-icon>`).join('')}</div>`);

define('doc-content', `
  :host{flex:1;padding-left:80px;background:#fff}
  .t{height:30px;overflow:hidden;${GEO}font-size:20px;line-height:30px;color:#001e2b;display:flex}
  .t span{margin-top:-22px}`, `
  <div class="t"><span style="margin-left:268px">y</span><span style="margin-left:38px">g</span><span style="margin-left:98px;color:#5d8f94">Launch</span><span style="margin-left:276px">g</span><span style="margin-left:122px">p</span></div>
  <track-player></track-player>`);

define('float-actions', `
  :host{position:absolute;right:61px;top:705px;display:flex;flex-direction:column;align-items:flex-end;gap:10px;${GEO}font-size:16.500px;font-weight:900}
  div{height:57px;border-radius:29px;background:#fff;display:flex;align-items:center;padding-bottom:1px}
  .a{width:179px;border:1px solid #0498ec;color:#1254b7;padding-left:21px;gap:6px;box-shadow:0 4px 10px rgba(150,150,150,.35)}
  .b{width:199px;border:1px solid #00a35c;color:#00684a;padding-left:21px;gap:12px}`, `
  <div class="a"><ui-icon name="fstar" w="18" h="17"></ui-icon><fit-text w="111">Rate this page</fit-text></div>
  <div class="b"><ui-icon name="spark" w="17"></ui-icon><fit-text w="127">Ask MongoDB AI</fit-text></div>`);

define('web-page', `
  :host{height:869px;display:flex;position:relative;background:#fff}
  .m{flex:1;display:flex;flex-direction:column;min-width:0}
  .r{display:flex;height:749px;overflow:hidden}
  .c{position:absolute;left:315px;top:810px;width:39px;height:39px;border-radius:50%;background:#fff;box-shadow:0 0 2px rgba(0,0,0,.3),0 3px 5px rgba(0,0,0,.13);display:flex;align-items:center;justify-content:center;padding-top:2px}`, `
  <div class="m"><site-header></site-header><div class="r"><side-bar></side-bar><scroll-bar a="-1" b="6" h="352" up="#a3a3a3"></scroll-bar><doc-content></doc-content></div></div>
  <scroll-bar a="9" b="76" h="208" up="#505050"></scroll-bar>
  <div class="c"><ui-icon name="left" w="12" h="18"></ui-icon></div><float-actions></float-actions>`);

define('task-app', `
  :host{width:55px;height:60px;display:flex;align-items:center;justify-content:center;position:relative;flex:none}
  :host([active])::before{content:"";position:absolute;left:3px;top:5px;width:49px;height:50px;border-radius:5px;background:#274570;border:1px solid #35517a}
  :host([run])::after{content:"";position:absolute;left:24px;top:50px;width:8px;height:4px;border-radius:2px;background:#93a3bb}
  :host([active])::after{left:18px;width:20px;background:#4cc2ff}
  ui-icon{position:relative}`,
  el => `<ui-icon name="${el.getAttribute('icon')}" w="30"></ui-icon><slot></slot>`);

const apps = ['file','lol','creeper','spotify','fl','hex','calc','explorer'];
define('task-bar', `
  :host{height:60px;background:#10305d;display:flex;align-items:center;color:#fff;position:relative;box-shadow:inset 0 1px #3a4d6d}
  .w{position:relative;margin-left:25px;width:241px}
  .w span{position:absolute;left:15px;top:-3px;width:20px;height:20px;border-radius:50%;background:#ff99a4;color:#222;text-align:center;font-size:14px;line-height:20px}
  .s{width:275px;height:40px;border-radius:20px;background:#334f78;border:1px solid #45608a;margin:0 13px 0 17px;display:flex;align-items:center;padding:0 7px 0 13px;font-size:17.500px;color:#dfe5ee}
  .g{position:absolute;color:#fff;font-weight:700}
  .d{font-size:15px;line-height:20px;display:flex;flex-direction:column;align-items:flex-end;width:68px;margin:-2px 0 0 21px}
  .z{position:relative;margin-left:11px}.c{position:relative;margin:-3px 25px 0 21px}
  .c b{position:absolute;left:7px;top:20px;width:23px;height:10px;background:#ffc60a;color:#111;font-size:9px;line-height:10px;text-align:center;border-radius:2px}`, `
  <div class="w"><ui-icon name="weather" w="36"></ui-icon><span>1</span></div>
  <ui-icon name="win" w="29"></ui-icon>
  <div class="s"><ui-icon name="tsearch" w="20"></ui-icon><fit-text w="52" style="margin-left:12px">Search</fit-text><ui-icon name="school" w="58" h="32" style="margin-left:auto"></ui-icon></div>
  <ui-icon name="taskview" w="32" h="30" style="margin-right:11px"></ui-icon>
  ${apps.map(a => `<task-app icon="${a}"></task-app>`).join('')}
  <task-app icon="word"><span style="position:absolute;left:15px;top:22px;font:700 11px/16px 'Open Sans'">W</span></task-app>
  <task-app icon="zoom"><span style="position:absolute;left:16px;top:22px;font:700 9px/14px 'Open Sans'"><fit-text w="22">zoom</fit-text></span></task-app>
  <task-app icon="ghub" run></task-app><task-app icon="sticky"></task-app><task-app icon="discord" style="margin-left:1px"></task-app>
  <task-app icon="chrome" active run><span style="position:absolute;left:29px;top:9px;width:19px;height:19px;border-radius:50%;background:#5229a8;font:600 12px/19px 'Open Sans';text-align:center">D</span></task-app>
  <task-app icon="vscode" run></task-app>
  <ui-icon name="tup" w="20" style="margin-left:82px"></ui-icon>
  <fit-text w="30" style="margin-left:23px;font-size:15px">ENG</fit-text>
  <ui-icon name="wifi" w="21" h="17" style="margin-left:22px"></ui-icon><ui-icon name="sound" w="20" h="16" style="margin-left:9px"></ui-icon><ui-icon name="battery" w="21" h="14" style="margin-left:10px"></ui-icon>
  <div class="d"><fit-text w="54">8:53 PM</fit-text><fit-text w="68">3/25/2024</fit-text></div>
  <div class="z"><ui-icon name="bell" w="17" h="21"></ui-icon><span class="g" style="left:5px;top:4px;font-size:10px;line-height:12px;color:#10305d">z</span><span class="g" style="left:11px;top:-4px;font-size:9px;line-height:12px">z</span></div>
  <div class="c"><ui-icon name="copilot" w="28" h="26"></ui-icon><b>PRE</b></div>`);

define('desktop-screen', `:host{width:1920px;height:1080px;overflow:hidden}`,
  `<browser-chrome></browser-chrome><web-page></web-page><task-bar></task-bar>`);

fitted.forEach(t => t.fit());
</script>
</body>
</html>
